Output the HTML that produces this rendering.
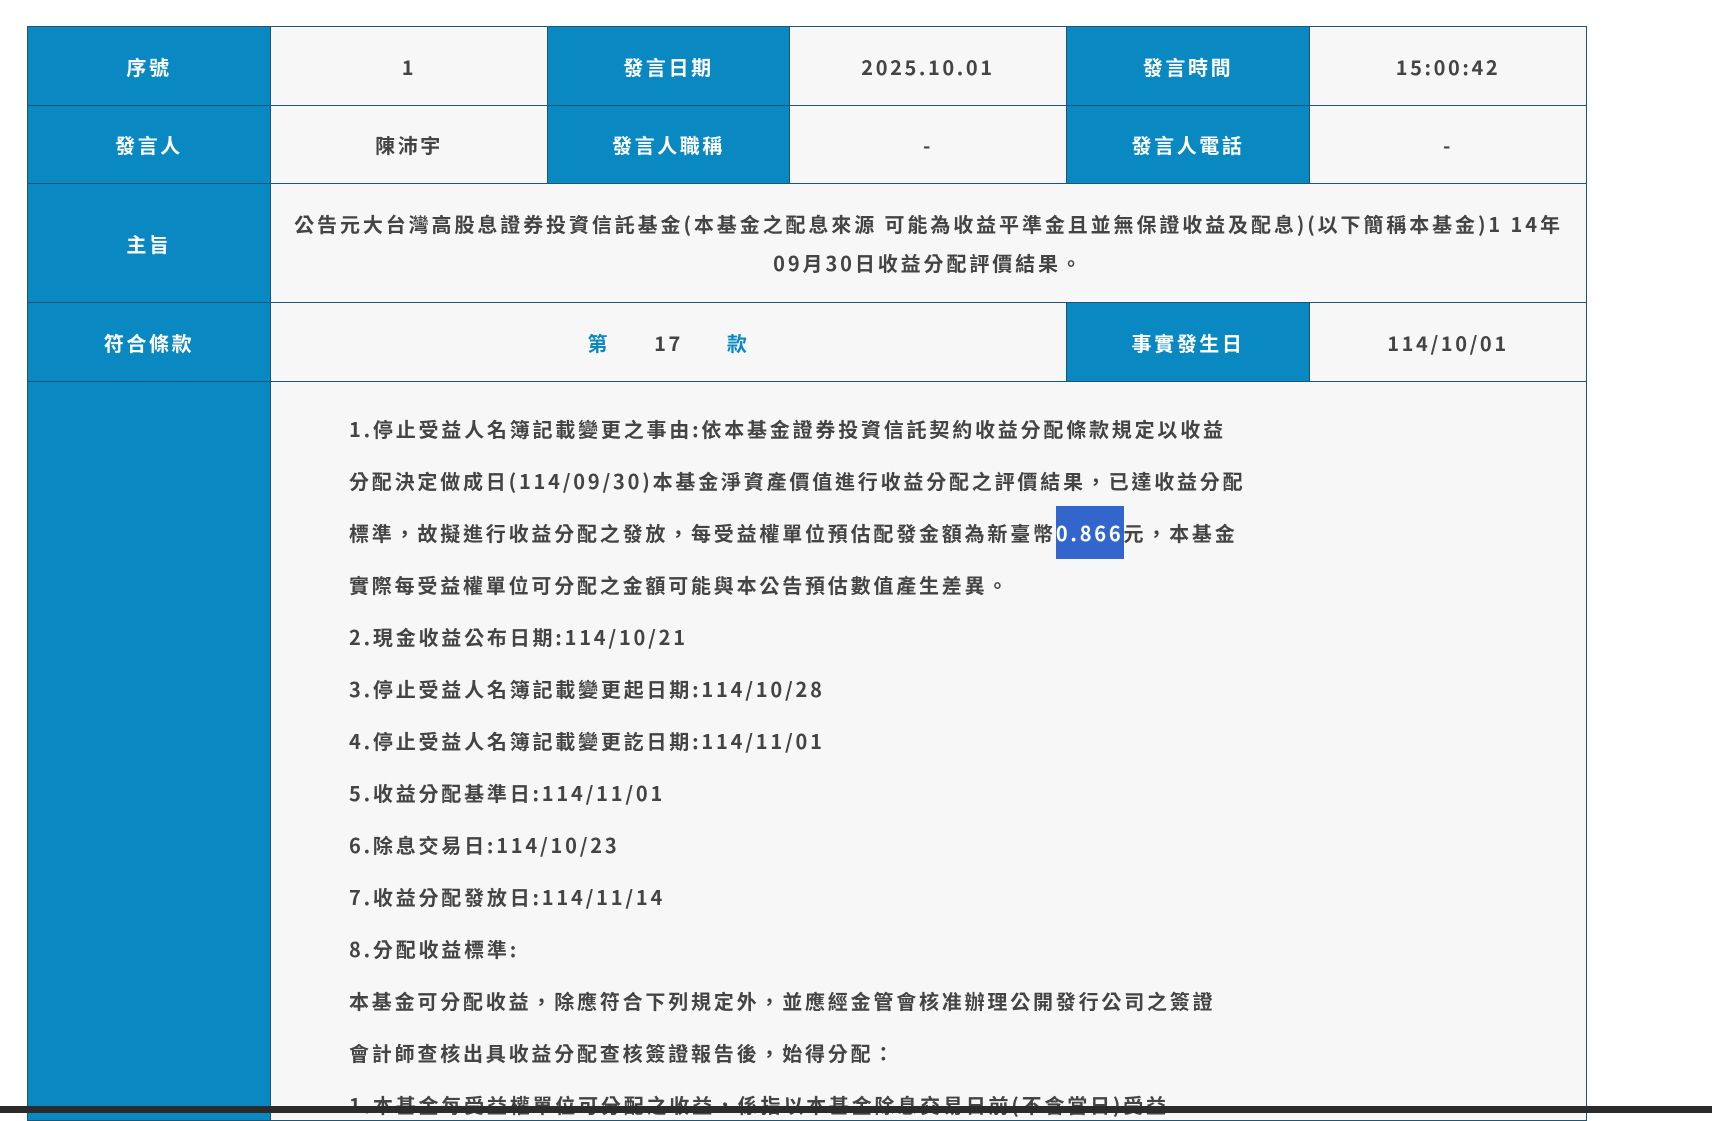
<!DOCTYPE html>
<html><head><meta charset="utf-8"><style>
*{margin:0;padding:0;box-sizing:border-box}
body{width:1712px;height:1113px;background:#fff;overflow:hidden;position:relative;font-family:"Noto Sans CJK TC","Liberation Sans",sans-serif;font-weight:700;color:#444}
.c{position:absolute;display:flex;align-items:center;justify-content:center;text-align:center;font-size:20px;letter-spacing:2.6px;border:1px solid #1d5673;}
.h{background:#0a88c2;color:#fff}
.v{background:#f7f7f8;color:#444}
.body{position:absolute;left:270px;top:381px;width:1317px;height:740px;background:#f7f7f8;border:1px solid #1d5673}
.l{position:absolute;left:78px;font-size:20px;letter-spacing:2.8px;white-space:nowrap;line-height:30px}
.hl{background:#3366cc;color:#fff;padding:12px 0}
.bar{position:absolute;left:0;top:1106px;width:1712px;height:7px;background:#2b2b2b}
</style></head><body>
<div class="c h" style="left:27px;top:26px;width:244px;height:80px">序號</div>
<div class="c v" style="left:270px;top:26px;width:278px;height:80px">1</div>
<div class="c h" style="left:547px;top:26px;width:243px;height:80px">發言日期</div>
<div class="c v" style="left:789px;top:26px;width:278px;height:80px">2025.10.01</div>
<div class="c h" style="left:1066px;top:26px;width:244px;height:80px">發言時間</div>
<div class="c v" style="left:1309px;top:26px;width:278px;height:80px">15:00:42</div>

<div class="c h" style="left:27px;top:105px;width:244px;height:79px">發言人</div>
<div class="c v" style="left:270px;top:105px;width:278px;height:79px">陳沛宇</div>
<div class="c h" style="left:547px;top:105px;width:243px;height:79px">發言人職稱</div>
<div class="c v" style="left:789px;top:105px;width:278px;height:79px">-</div>
<div class="c h" style="left:1066px;top:105px;width:244px;height:79px">發言人電話</div>
<div class="c v" style="left:1309px;top:105px;width:278px;height:79px">-</div>

<div class="c h" style="left:27px;top:183px;width:244px;height:120px">主旨</div>
<div class="c v" style="left:270px;top:183px;width:1317px;height:120px;line-height:39px;padding:0 10px;letter-spacing:2.9px">公告元大台灣高股息證券投資信託基金(本基金之配息來源 可能為收益平準金且並無保證收益及配息)(以下簡稱本基金)1 14年<br>09月30日收益分配評價結果。</div>

<div class="c h" style="left:27px;top:302px;width:244px;height:80px">符合條款</div>
<div class="c v" style="left:270px;top:302px;width:797px;height:80px"><span style="color:#0a88c2">第</span><span style="margin:0 44px">17</span><span style="color:#0a88c2">款</span></div>
<div class="c h" style="left:1066px;top:302px;width:244px;height:80px">事實發生日</div>
<div class="c v" style="left:1309px;top:302px;width:278px;height:80px">114/10/01</div>

<div class="c h" style="left:27px;top:381px;width:244px;height:740px"></div>
<div class="body">
<div class="l" style="top:32px">1.停止受益人名簿記載變更之事由:依本基金證券投資信託契約收益分配條款規定以收益</div>
<div class="l" style="top:84px">分配決定做成日(114/09/30)本基金淨資產價值進行收益分配之評價結果，已達收益分配</div>
<div class="l" style="top:136px">標準，故擬進行收益分配之發放，每受益權單位預估配發金額為新臺幣<span class="hl">0.866</span>元，本基金</div>
<div class="l" style="top:188px">實際每受益權單位可分配之金額可能與本公告預估數值產生差異。</div>
<div class="l" style="top:240px">2.現金收益公布日期:114/10/21</div>
<div class="l" style="top:292px">3.停止受益人名簿記載變更起日期:114/10/28</div>
<div class="l" style="top:344px">4.停止受益人名簿記載變更訖日期:114/11/01</div>
<div class="l" style="top:396px">5.收益分配基準日:114/11/01</div>
<div class="l" style="top:448px">6.除息交易日:114/10/23</div>
<div class="l" style="top:500px">7.收益分配發放日:114/11/14</div>
<div class="l" style="top:552px">8.分配收益標準:</div>
<div class="l" style="top:604px">本基金可分配收益，除應符合下列規定外，並應經金管會核准辦理公開發行公司之簽證</div>
<div class="l" style="top:656px">會計師查核出具收益分配查核簽證報告後，始得分配：</div>
<div class="l" style="top:708px">1.本基金每受益權單位可分配之收益，係指以本基金除息交易日前(不含當日)受益</div>
</div>
<div class="bar"></div>
</body></html>
